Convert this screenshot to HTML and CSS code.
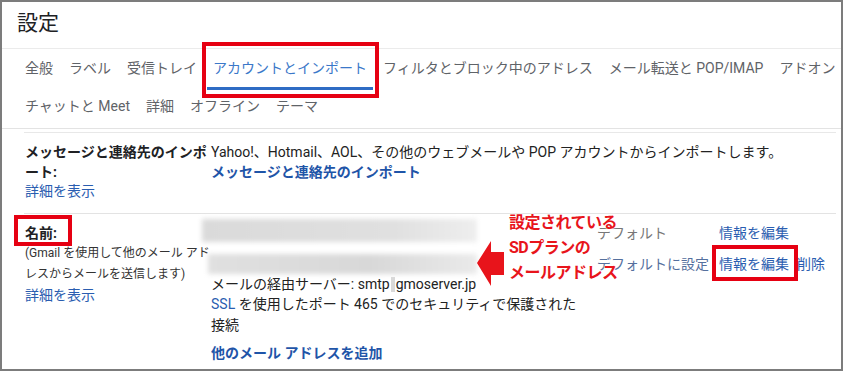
FILE: index.html
```html
<!DOCTYPE html>
<html lang="ja">
<head>
	<meta charset="utf-8">
	<title>設定</title>
	<link rel="stylesheet" href="styles.css">
</head>
<body>
	<div class="frame">
		<header class="head">
			<h1 class="title">設定</h1>
		</header>

		<nav class="tabs">
			<a class="tab">全般</a>
			<a class="tab">ラベル</a>
			<a class="tab">受信トレイ</a>
			<a class="tab active">アカウントとインポート</a>
			<a class="tab">フィルタとブロック中のアドレス</a>
			<a class="tab">メール転送と POP/IMAP</a>
			<a class="tab">アドオン</a>
			<a class="tab">チャットと Meet</a>
			<a class="tab">詳細</a>
			<a class="tab">オフライン</a>
			<a class="tab">テーマ</a>
		</nav>

		<div class="settings">
			<div class="row row-import">
				<div class="label">
					<b class="label-title">メッセージと連絡先のインポート:</b>
					<a class="link">詳細を表示</a>
				</div>
				<div class="value">
					<p class="text">Yahoo!、Hotmail、AOL、その他のウェブメールや POP アカウントからインポートします。</p>
					<a class="link strong">メッセージと連絡先のインポート</a>
				</div>
			</div>

			<div class="row row-send">
				<div class="label">
					<b class="label-title">名前:</b>
					<p class="note"><span>(Gmail を使用して他のメール アド</span><span>レスからメールを送信します)</span></p>
					<a class="link">詳細を表示</a>
				</div>
				<div class="accounts">
					<div class="acct acct-first">
						<div class="addr"><span class="blur blur-name"></span></div>
						<span class="status">デフォルト</span>
						<a class="link">情報を編集</a>
						<span></span>
					</div>
					<div class="acct">
						<div class="addr">
							<span class="blur blur-addr"></span>
							<p class="server">メールの経由サーバー: smtp<span class="mask"></span>gmoserver.jp<br><a class="link">SSL</a> を使用したポート 465 でのセキュリティで保護された<span class="keep">接続</span></p>
						</div>
						<a class="link muted">デフォルトに設定</a>
						<a class="link">情報を編集</a>
						<a class="link">削除</a>
					</div>
					<a class="link strong add">他のメール アドレスを追加</a>
				</div>
			</div>
		</div>

		<!-- annotations drawn over the screenshot -->
		<span class="mark mark-tab"></span>
		<span class="mark mark-name"></span>
		<span class="mark mark-edit"></span>
		<p class="callout">設定されている<br>SDプランの<br>メールアドレス</p>
		<svg class="arrow" width="27" height="45" viewBox="0 0 27 45">
			<polygon points="0,22 14,0 14,11 27,11 27,34 14,34 14,45" fill="#e8141b"/>
		</svg>
	</div>
</body>
</html>
```

FILE: styles.css
```css
*{
	box-sizing: border-box;
}
body{
	margin: 0;
	background: #fff;
	font-family: Roboto, "Noto Sans CJK JP", sans-serif;
	color: #222;
}
a{
	text-decoration: none;
	cursor: pointer;
}
p{
	margin: 0;
}
.frame{
	position: relative;
	width: 843px;
	height: 371px;
	border: 2px solid #7c7c7c;
	overflow: hidden;
}

/* title */
.head{
	height: 47px;
	padding: 6px 0 0 15px;
	border-bottom: 1px solid #ebebeb;
}
.title{
	margin: 0;
	font-size: 21px;
	line-height: 30px;
	font-weight: 400;
	color: #202124;
}

/* tabs */
.tabs{
	display: flex;
	flex-wrap: wrap;
	column-gap: 16px;
	padding: 3px 0 0 23px;
	border-bottom: 1px solid #e3e3e3;
}
.tab{
	padding: 6px 0 9px;
	font-size: 14px;
	line-height: 20px;
	color: #5f6368;
	border-bottom: 3px solid transparent;
	white-space: nowrap;
}
.tab.active{
	margin: 0 -6px;
	padding-left: 6px;
	padding-right: 6px;
	color: #3b78c9;
	border-bottom-color: #2f6cc4;
}

/* settings table */
.settings{
	margin: 3px 5px 0 22px;
	border-top: 1px solid #e8e8e8;
}
.row{
	display: grid;
	grid-template-columns: 186px 1fr;
	padding-left: 1px;
	font-size: 14px;
}
.row-import{
	padding-top: 10px;
	padding-bottom: 11px;
	line-height: 19.5px;
	border-bottom: 1px solid #e3e3e3;
}
.label{
	display: flex;
	flex-direction: column;
	align-items: flex-start;
}
.label-title{
	font-weight: 700;
	color: #202124;
}
.link{
	color: #2a5db0;
}
.link.strong{
	font-weight: 700;
	color: #1f55a8;
}
.link.muted{
	color: #55709e;
}

.row-send{
	padding-top: 9px;
	line-height: 20px;
}
.note{
	font-size: 12px;
	line-height: 21px;
	color: #333;
}
.note span{
	display: block;
	white-space: nowrap;
}
.row-send .label .link{
	line-height: 21px;
}

.accounts{
	margin-top: -4px;
}
.acct{
	display: grid;
	grid-template-columns: 386px 122px 78px auto;
	align-items: start;
}
.acct-first{
	line-height: 28px;
	margin-bottom: 7px;
}
.status{
	color: #777;
}
.blur{
	display: block;
	filter: blur(2.5px);
}
.blur-name{
	width: 275px;
	height: 23px;
	margin-left: -9px;
	background: linear-gradient(to right, #dadada, #e0e0e0 70%, #eeeeee);
}
.blur-addr{
	width: 269px;
	height: 20px;
	margin-left: -3px;
	background: linear-gradient(to right, #e0e0e0, #d8d8d8 60%, #eaeaea);
}
.server{
	line-height: 20.5px;
	color: #222;
}
.keep{
	white-space: nowrap;
}
.mask{
	display: inline-block;
	width: 4px;
	height: 15px;
	margin: 0 1px;
	vertical-align: -3px;
	background: #d9d9d9;
}
.add{
	display: block;
	margin-top: 7.5px;
}

/* annotation overlays */
.mark{
	position: absolute;
	border: 4px solid #e60012;
}
.mark-tab{
	left: 200px;
	top: 40px;
	width: 177px;
	height: 56px;
}
.mark-name{
	left: 12px;
	top: 213px;
	width: 58px;
	height: 31px;
}
.mark-edit{
	left: 710px;
	top: 243px;
	width: 86px;
	height: 36px;
}
.callout{
	position: absolute;
	left: 507px;
	top: 208px;
	font-size: 16px;
	letter-spacing: -0.5px;
	line-height: 25px;
	font-weight: 700;
	color: #e8141b;
	text-shadow: 0 0 2px #fff, 0 0 2px #fff;
}
.arrow{
	position: absolute;
	left: 475px;
	top: 239px;
}
```
